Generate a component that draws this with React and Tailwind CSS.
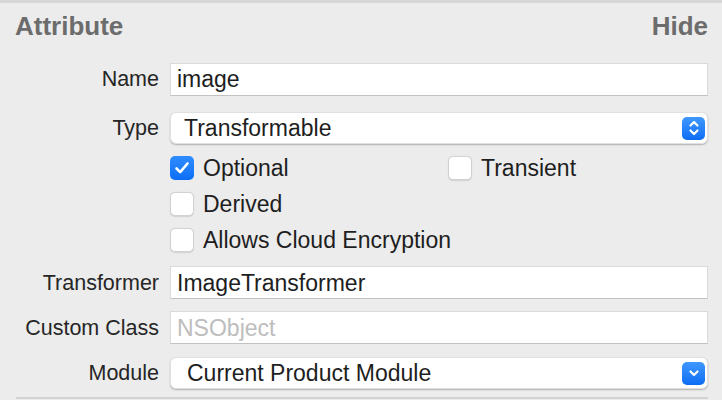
import React from 'react';

const font = { fontFamily: '"Liberation Sans", Arial, sans-serif' };

function Label({ children }) {
  return (
    <div className="w-[159px] shrink-0 text-right text-[21.5px] text-[#262626]">
      {children}
    </div>
  );
}

function TextField({ value, placeholder }) {
  return (
    <div className="ml-[11px] flex-1 h-[33px] bg-white border border-[#dadada] border-b-[#c2c2c2] flex items-center pl-[6px] text-[23px]">
      {value ? (
        <span className="text-[#1e1e1e]">{value}</span>
      ) : (
        <span className="text-[#bdbdbd]">{placeholder}</span>
      )}
    </div>
  );
}

function PopUp({ value, stepper, pad }) {
  return (
    <div
      className={`ml-[11px] flex-1 h-[32px] bg-white rounded-[6px] border border-[#e0e0e0] shadow-[0_1px_1.5px_rgba(0,0,0,0.25)] flex items-center pr-[2px] ${pad}`}
    >
      <span className="flex-1 text-[23px] text-[#1e1e1e]">{value}</span>
      <div className="w-[23px] h-[23px] rounded-[5px] bg-gradient-to-b from-[#3f98ff] to-[#0b6cf3] flex items-center justify-center">
        {stepper ? (
          <svg width="12" height="18" viewBox="0 0 12 18" fill="none">
            <path d="M2.5 6.5 L6 3 L9.5 6.5" stroke="white" strokeWidth="2.2" strokeLinecap="round" strokeLinejoin="round" />
            <path d="M2.5 11.5 L6 15 L9.5 11.5" stroke="white" strokeWidth="2.2" strokeLinecap="round" strokeLinejoin="round" />
          </svg>
        ) : (
          <svg width="12" height="10" viewBox="0 0 12 10" fill="none">
            <path d="M2.5 3.5 L6 7 L9.5 3.5" stroke="white" strokeWidth="2.2" strokeLinecap="round" strokeLinejoin="round" />
          </svg>
        )}
      </div>
    </div>
  );
}

function Checkbox({ checked, label }) {
  return (
    <div className="flex items-center h-[24px]">
      {checked ? (
        <div className="w-[24px] h-[24px] rounded-[5px] bg-gradient-to-b from-[#2f8cff] to-[#0a6ef5] flex items-center justify-center">
          <svg width="16" height="14" viewBox="0 0 16 14" fill="none">
            <path d="M2.5 7.5 L6.2 11.2 L13.5 2.5" stroke="white" strokeWidth="2.6" strokeLinecap="round" strokeLinejoin="round" />
          </svg>
        </div>
      ) : (
        <div className="w-[24px] h-[24px] rounded-[5px] bg-white border border-[#d2d2d2] shadow-[0_0.5px_1px_rgba(0,0,0,0.12)]" />
      )}
      <span className="ml-[9px] text-[23px] text-[#1e1e1e]">{label}</span>
    </div>
  );
}

export default function App() {
  return (
    <div className="w-[722px] h-[400px] bg-[#ececec] overflow-hidden" style={font}>
      <div className="h-[3px] bg-[#d6d6d6]" />
      <div className="flex justify-between pl-[15px] pr-[14px] pt-[10px] h-[35px] text-[26px] leading-[26px] font-bold text-[#6c6c6c]">
        <span>Attribute</span>
        <span>Hide</span>
      </div>

      <div className="pr-[14px]">
        <div className="flex items-center mt-[25px]">
          <Label>Name</Label>
          <TextField value="image" />
        </div>

        <div className="flex items-center mt-[16px]">
          <Label>Type</Label>
          <PopUp value="Transformable" stepper pad="pl-[13px]" />
        </div>

        <div className="ml-[170px] mt-[12px] flex flex-col gap-[12px]">
          <div className="flex">
            <div className="w-[278px]">
              <Checkbox checked label="Optional" />
            </div>
            <Checkbox label="Transient" />
          </div>
          <Checkbox label="Derived" />
          <Checkbox label="Allows Cloud Encryption" />
        </div>

        <div className="flex items-center mt-[14px]">
          <Label>Transformer</Label>
          <TextField value="ImageTransformer" />
        </div>

        <div className="flex items-center mt-[12px]">
          <Label>Custom Class</Label>
          <TextField placeholder="NSObject" />
        </div>

        <div className="flex items-center mt-[13px]">
          <Label>Module</Label>
          <PopUp value="Current Product Module" pad="pl-[16px]" />
        </div>
      </div>

      <div className="ml-[16px] mr-[14px] mt-[7px] h-[2px] bg-[#d2d2d2]" />
    </div>
  );
}
